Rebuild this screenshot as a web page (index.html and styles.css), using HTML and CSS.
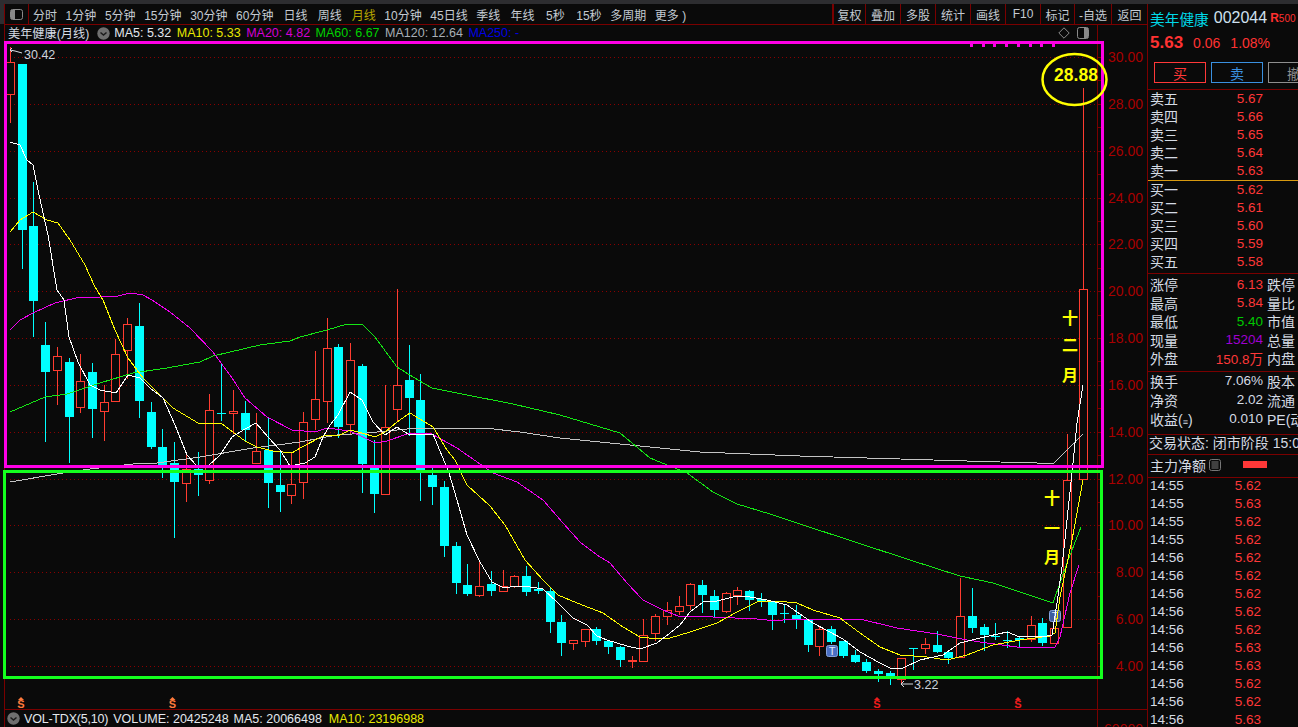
FILE: index.html
```html
<!DOCTYPE html>
<html lang="zh-CN">
<head>
<meta charset="utf-8">
<title>美年健康 002044</title>
<link rel="stylesheet" href="styles.css">
</head>
<body>
<div class="app">
  <div class="topstrip"></div>
  <div class="main">
    <div class="rail"></div>
    <div class="chart-col">
      <div class="toolbar">
        <div class="tb-toggle">
          <svg width="13" height="11" viewBox="0 0 13 11"><rect x="0.5" y="0.5" width="12" height="10" rx="2" fill="none" stroke="#8a8a8a"/><rect x="1" y="1" width="4" height="9" fill="#8a8a8a"/></svg>
        </div>
        <div class="tabs">
          <span>分时</span><span>1分钟</span><span>5分钟</span><span>15分钟</span><span>30分钟</span><span>60分钟</span><span class="w">日线</span><span class="w">周线</span><span class="active w">月线</span><span>10分钟</span><span>45日线</span><span>季线</span><span class="w">年线</span><span class="x">5秒</span><span class="x">15秒</span><span>多周期</span><span>更多 )</span>
        </div>
        <div class="actions">
          <span>复权</span><span>叠加</span><span>多股</span><span>统计</span><span>画线</span><span>F10</span><span>标记</span><span>-自选</span><span>返回</span>
        </div>
      </div>
      <div class="legend">
        <span class="title">美年健康(月线)</span>
        <svg class="chev" width="13" height="13" viewBox="0 0 13 13"><circle cx="6.5" cy="6.5" r="6.2" fill="#6f6f6f"/><path d="M3.5 5.5l3 2.6 3-2.6" fill="none" stroke="#1c1c1c" stroke-width="1.5"/></svg>
        <span class="c-white">MA5: 5.32</span>
        <span class="c-yellow">MA10: 5.33</span>
        <span class="c-magenta">MA20: 4.82</span>
        <span class="c-green">MA60: 6.67</span>
        <span class="c-gray">MA120: 12.64</span>
        <span class="c-blue">MA250: -</span>
        <span class="legend-icons">
          <svg width="12" height="12" viewBox="0 0 12 12"><path d="M6 .8L11.2 6 6 11.2.8 6z" fill="none" stroke="#8a8a8a"/></svg>
          <svg width="12" height="12" viewBox="0 0 12 12"><rect x="0.5" y="0.5" width="11" height="11" rx="2" fill="none" stroke="#8a8a8a"/><rect x="7" y="1" width="4" height="10" fill="#8a8a8a"/></svg>
        </span>
        <span class="scale-cell"></span>
      </div>
      <svg id="chart" class="chart" width="1142" height="668" viewBox="5 41 1142 668">
        <g id="grid"></g>
        <g id="candles"></g>
        <g class="badge">
          <rect x="826.500" y="645.500" width="11" height="11" rx="2" fill="#4a6fc4" stroke="#86a2dc"/>
          <text x="832" y="655" text-anchor="middle" class="badge-t">T</text>
          <rect x="1049.500" y="610.500" width="11" height="11" rx="2" fill="#4a6fc4" fill-opacity=".8" stroke="#86a2dc"/>
          <text x="1055" y="620" text-anchor="middle" class="badge-t">T</text>
        </g>
        <g id="lines"></g>
        <g class="axis-labels" id="axis"></g>
        <path class="note-line" d="M10 50l2-2M10 50l2 2M10 50l5 1 7 2"/>
        <text x="24" y="59" class="note">30.42</text>
        <path class="note-line" d="M901 684h12M901 684l3-3M901 684l3 3"/>
        <text x="914" y="689" class="note">3.22</text>
        <g class="marker orange"><path d="M21 697l3 3h-6z"/><text x="21" y="708">S</text></g>
        <g class="marker orange"><path d="M172.500 697l3 3h-6z"/><text x="172.500" y="708">S</text></g>
        <g class="marker red"><path d="M877 697l3 3h-6z"/><text x="877" y="708">S</text></g>
        <g class="marker red"><path d="M1018 697l3 3h-6z"/><text x="1018" y="708">S</text></g>
        <rect class="box-m" x="5.500" y="42.500" width="1097" height="424"/>
        <path class="box-ticks" d="M970 44h3v3h-3zM982 44h3v3h-3zM993 44h3v3h-3zM1005 44h3v3h-3zM1017 44h3v3h-3zM1029 44h3v3h-3zM1040 44h3v3h-3zM1052 44h3v3h-3z"/>
        <rect class="box-g" x="4.500" y="471.500" width="1097" height="206"/>
        <ellipse class="ring" cx="1074.500" cy="79.500" rx="32" ry="25.500"/>
        <text x="1076" y="81" text-anchor="middle" class="peak">28.88</text>
        <g class="month">
          <text x="1070" y="324">十</text><text x="1070" y="351">二</text><text x="1070" y="381">月</text>
          <text x="1052" y="504">十</text><text x="1052" y="534">一</text><text x="1052" y="563">月</text>
        </g>
      </svg>
      <div class="vol-legend">
        <svg class="chev" width="13" height="13" viewBox="0 0 13 13"><circle cx="6.5" cy="6.5" r="6.2" fill="#6f6f6f"/><path d="M3.5 5.500l3 2.600 3-2.600" fill="none" stroke="#1c1c1c" stroke-width="1.500"/></svg>
        <span class="c-white tight">VOL-TDX(5,10)</span>
        <span class="c-white">VOLUME: 20425248</span>
        <span class="c-white">MA5: 20066498</span>
        <span class="c-yellow more">MA10: 23196988</span>
        <span class="scale-cell vol-scale">60000</span>
      </div>
    </div>
    <aside class="side">
      <div class="stock"><span class="name">美年健康</span><span class="code">002044</span><span class="r500"><b>R</b>500</span></div>
      <div class="quote"><b>5.63</b><span>0.06</span><span>1.08%</span></div>
      <div class="trade"><span class="buy">买</span><span class="sell">卖</span><span class="cancel">撤</span></div>
      <div class="book sect">
        <div class="row"><span>卖五</span><em>5.67</em></div>
        <div class="row"><span>卖四</span><em>5.66</em></div>
        <div class="row"><span>卖三</span><em>5.65</em></div>
        <div class="row"><span>卖二</span><em>5.64</em></div>
        <div class="row"><span>卖一</span><em>5.63</em></div>
      </div>
      <div class="book mid">
        <div class="row"><span>买一</span><em>5.62</em></div>
        <div class="row"><span>买二</span><em>5.61</em></div>
        <div class="row"><span>买三</span><em>5.60</em></div>
        <div class="row"><span>买四</span><em>5.59</em></div>
        <div class="row"><span>买五</span><em>5.58</em></div>
      </div>
      <div class="stats one sect">
        <div class="row"><span>涨停</span><em>6.13</em><span class="r">跌停</span></div>
        <div class="row"><span>最高</span><em>5.84</em><span class="r">量比</span></div>
        <div class="row"><span>最低</span><em class="g">5.40</em><span class="r">市值</span></div>
        <div class="row"><span>现量</span><em class="p">15204</em><span class="r">总量</span></div>
        <div class="row"><span>外盘</span><em>150.8万</em><span class="r">内盘</span></div>
      </div>
      <div class="stats two sect">
        <div class="row"><span>换手</span><em class="w">7.06%</em><span class="r">股本</span></div>
        <div class="row"><span>净资</span><em class="w">2.02</em><span class="r">流通</span></div>
        <div class="row"><span>收益(<small>≡</small>)</span><em class="w">0.010</em><span class="r">PE(动</span></div>
      </div>
      <div class="state sect">交易状态: 闭市阶段 15:00</div>
      <div class="flow sect">
        <span>主力净额</span>
        <svg width="12" height="12" viewBox="0 0 12 12"><rect x=".5" y=".5" width="11" height="11" rx="2" fill="none" stroke="#777"/><path d="M2.500 3h7M2.500 5h7M2.500 7h7M2.500 9h7" stroke="#777"/></svg>
        <i class="bar"></i>
      </div>
      <div class="ticks sect">
        <div class="tick"><span>14:55</span><em>5.62</em></div>
        <div class="tick"><span>14:55</span><em>5.63</em></div>
        <div class="tick"><span>14:55</span><em>5.62</em></div>
        <div class="tick"><span>14:55</span><em>5.62</em></div>
        <div class="tick"><span>14:56</span><em>5.62</em></div>
        <div class="tick"><span>14:56</span><em>5.62</em></div>
        <div class="tick"><span>14:56</span><em>5.62</em><i></i></div>
        <div class="tick"><span>14:56</span><em>5.62</em></div>
        <div class="tick"><span>14:56</span><em>5.62</em><i></i></div>
        <div class="tick"><span>14:56</span><em>5.63</em></div>
        <div class="tick"><span>14:56</span><em>5.63</em></div>
        <div class="tick"><span>14:56</span><em>5.62</em></div>
        <div class="tick"><span>14:56</span><em>5.62</em></div>
        <div class="tick"><span>14:56</span><em>5.63</em></div>
      </div>
    </aside>
  </div>
</div>
<script src="chart.js"></script>
</body>
</html>
```

FILE: styles.css
```css
* { box-sizing: border-box; }
html, body { margin: 0; height: 100%; overflow: hidden; background: #0a0a0a; }
body { font-family: "Liberation Sans", "Noto Sans CJK SC", sans-serif; color: #d5dbe4; }
em, i { font-style: normal; }

.app { width: 1298px; height: 727px; display: flex; flex-direction: column; overflow: hidden; }
.topstrip { height: 4px; flex: none; background: #2d2d30; }
.main { flex: 1; display: flex; min-height: 0; }
.rail { width: 4px; flex: none; }
.rail::before { content: ""; display: block; height: 20px; background: #2d2d30; }

.chart-col { width: 1143px; flex: none; display: flex; flex-direction: column; border-left: 1px solid #7a0000; }

.toolbar { height: 21px; flex: none; display: flex; align-items: stretch; border-bottom: 1px solid #7a0000; font-size: 12px; color: #c4cad2; }
.tb-toggle { width: 24px; flex: none; display: flex; align-items: center; justify-content: center; border-right: 1px solid #7a0000; }
.tabs { display: flex; align-items: center; gap: 8.6px; padding-left: 4px; white-space: nowrap; font-size: 12px; }
.tabs span { display: block; }
.tabs .w { margin-left: 1.5px; }
.tabs .x { margin-left: 3px; }
.tabs .active { color: #b8a800; }
.actions { margin-left: auto; display: flex; border-left: 2px solid #7a0000; font-size: 12px; }
.actions span { width: 35px; display: flex; align-items: center; justify-content: center; border-right: 1px solid #7a0000; }
.actions span:first-child { width: 32px; }
.actions span:nth-child(7) { width: 34px; }
.actions span:nth-child(8) { width: 37px; }
.actions span:last-child { border-right: 0; }

.legend { height: 16px; flex: none; display: flex; align-items: center; padding-left: 3px; font-size: 12.500px; white-space: nowrap; gap: 5.500px; }
.legend .title { color: #d5dbe4; font-size: 12.200px; }
.legend .chev { margin: 0 -1px 0 2px; }
.legend-icons { margin-left: auto; display: flex; gap: 7px; margin-right: 3px; }
.scale-cell { width: 50px; flex: none; align-self: stretch; border-left: 1px solid #7a0000; }
.c-white { color: #e4e8ee; }
.c-yellow { color: #e8e800; }
.c-magenta { color: #d400d4; }
.c-green { color: #00d000; }
.c-gray { color: #a8aeb6; }
.c-blue { color: #0000e6; }

.chart { display: block; flex: none; overflow: visible; }
.gridline { stroke: #8a0000; stroke-width: 1; stroke-dasharray: 1 3; shape-rendering: crispEdges; }
.tickmark { stroke: #7a0000; stroke-width: 1; shape-rendering: crispEdges; }
.axis-line { stroke: #7a0000; stroke-width: 1; shape-rendering: crispEdges; }
.axis-labels text { fill: #a80000; font-size: 14px; text-anchor: end; }
.up { fill: #0a0a0a; stroke: #ff3c30; stroke-width: 1; shape-rendering: crispEdges; }
.up-w { stroke: #ff3c30; stroke-width: 1; shape-rendering: crispEdges; }
.dn { fill: #00ffff; shape-rendering: crispEdges; }
.dn-w { stroke: #00ffff; stroke-width: 1; shape-rendering: crispEdges; }
.ma { fill: none; stroke-width: 1; shape-rendering: crispEdges; }
.note { fill: #ccd3dc; font-size: 12.500px; }
.note-line { fill: none; stroke: #d8dce2; stroke-width: 1; }
.badge-t { fill: #e6ecf6; font-size: 11px; }
.marker text { font-size: 11px; font-weight: 700; text-anchor: middle; }
.marker.orange { fill: #ff7a3c; }
.marker.red { fill: #ee1c1c; }
.box-m { fill: none; stroke: #ff00e6; stroke-width: 3; shape-rendering: crispEdges; }
.box-g { fill: none; stroke: #14ff1e; stroke-width: 3; shape-rendering: crispEdges; }
.box-ticks { fill: #ff00e6; }
.ring { fill: none; stroke: #ffff00; stroke-width: 2.500; }
.peak { fill: #ffff00; font-size: 17.500px; font-weight: 700; }
.month text { fill: #ffff00; font-size: 16px; font-weight: 700; text-anchor: middle; }

.vol-legend { flex: 1; min-height: 0; display: flex; align-items: center; padding-left: 2px; gap: 5px; border-top: 1px solid #7a0000; font-size: 12.500px; white-space: nowrap; overflow: hidden; }
.vol-legend .chev { margin-right: -1px; }
.vol-legend .tight { letter-spacing: -0.2px; }
.vol-legend .more { margin-left: 2px; }
.vol-scale { margin-left: auto; text-align: right; padding: 11px 4px 0 0; color: #a80000; font-size: 14px; }

.side { flex: 1; min-width: 0; display: flex; flex-direction: column; overflow: hidden; border-left: 1px solid #7a0000; font-size: 14px; }
.side > div { flex: none; }
.stock { height: 30px; display: flex; align-items: center; padding: 0 0 2px 2px; white-space: nowrap; }
.name { color: #00d8e8; font-size: 14.700px; }
.code { font-size: 16px; margin-left: 5px; color: #cfe0ee; }
.r500 { margin-left: 3px; color: #ff3030; font-size: 10px; }
.r500 b { font-size: 12px; }
.quote { height: 18px; display: flex; align-items: center; gap: 10px; padding-left: 2px; color: #ff3232; font-size: 14px; }
.quote b { font-size: 17px; }
.trade { height: 37px; display: flex; gap: 5px; padding: 10px 0 6px 6px; }
.trade span { width: 52px; flex: none; display: flex; align-items: center; justify-content: center; border: 1px solid; }
.buy { color: #ff3838; border-color: #ff3838 !important; }
.sell { color: #3a90e0; border-color: #3a90e0 !important; }
.cancel { color: #8e8e8e; border-color: #8e8e8e !important; }
.sect { border-top: 1px solid #7a0000; }

.row { display: flex; align-items: center; padding: 0 0 2px 2px; white-space: nowrap; }
.row span { width: 45px; flex: none; }
.row em { width: 68px; flex: none; text-align: right; color: #ff3838; font-size: 13.500px; }
.row .r { width: auto; margin-left: 4px; }
.book { height: 91px; }
.book .row { height: 18px; }
.book.mid { border-top: 1px solid #d89a10; height: 93px; }
.stats.one { height: 98px; padding-top: 2px; }
.stats.one .row { height: 18.500px; }
.stats.two { height: 63px; }
.stats .row em.g { color: #00c800; }
.stats .row em.p { color: #a000d0; }
.stats .row em.w { color: #d5dbe4; }
.stats.two .row { height: 19px; }
small { font-size: 9px; }
.state { height: 20px; line-height: 17px; padding-left: 1px; white-space: nowrap; }
.flow { height: 23px; display: flex; align-items: center; padding: 0 0 3px 2px; gap: 3px; white-space: nowrap; }
.bar { width: 24px; height: 7px; margin-left: 19px; background: #ff3838; }
.ticks { flex: 1; }
.tick { height: 18px; display: flex; align-items: center; padding: 0 0 4px 2px; font-size: 13.500px; }
.tick span { width: 45px; flex: none; }
.tick em { width: 66px; flex: none; text-align: right; color: #ff3838; }
.tick i { width: 2px; height: 5px; margin-left: 37px; background: #8a10d0; }
```

FILE: chart.js
```js
var NS = "http://www.w3.org/2000/svg";
function add(parent, tag, attrs, text) {
  var el = document.createElementNS(NS, tag);
  for (var k in attrs) el.setAttribute(k, attrs[k]);
  if (text) el.textContent = text;
  parent.appendChild(el);
  return el;
}
function priceY(p) { return 57 + (30 - p) * 23.42; }

var grid = document.getElementById("grid");
var axis = document.getElementById("axis");
add(grid, "line", { x1: 1097.5, x2: 1097.5, y1: 41, y2: 709, "class": "axis-line" });
for (var p = 30; p >= 4; p -= 1) {
  var y = Math.round(priceY(p)) + 0.5;
  add(grid, "line", { x1: 1097, x2: 1101, y1: y, y2: y, "class": "tickmark" });
  if (p % 2 === 0) {
    add(grid, "line", { x1: 10, x2: 1097, y1: y, y2: y, "class": "gridline" });
    add(axis, "text", { x: 1143, y: y + 4 }, p.toFixed(2));
  }
}

// centre x, 1 = up (red outline) / 0 = down (cyan fill), body top, body bottom, wick top, wick bottom
var candles = [
[10,1,62,94,47,122],[22,0,64,230,64,268],[33,0,226,301,182,336],[45,0,345,372,322,441],
[57,1,356,370,347,404],[69,0,362,417,358,462],[80,1,381,407,354,412],[92,0,372,409,363,437],
[104,1,402,411,385,440],[115,1,354,401,339,401],[127,1,324,350,318,378],[139,0,326,401,303,417],
[151,0,412,447,402,448],[162,0,447,466,429,477],[174,0,463,482,442,537],[186,1,469,483,455,501],
[198,0,469,475,452,495],[209,1,410,480,394,483],[221,0,413,414,364,420],[233,1,411,413,390,433],
[245,0,413,430,401,440],[256,1,451,463,413,463],[268,0,450,483,417,507],[280,0,485,492,450,511],
[291,1,484,495,453,503],[303,1,422,482,412,498],[315,1,399,419,351,429],[327,1,348,401,318,422],
[338,0,347,427,344,437],[350,1,360,424,343,433],[362,0,366,464,364,492],[374,0,466,494,440,512],
[385,1,427,494,385,494],[397,1,385,409,289,420],[409,0,380,398,345,435],[420,0,400,470,374,500],
[432,0,475,487,468,504],[444,0,487,546,481,556],[456,0,546,583,542,593],[467,0,585,594,564,595],
[479,1,586,595,562,596],[491,0,584,591,571,595],[503,1,586,591,570,591],[514,1,576,586,575,587],
[526,0,576,592,566,595],[538,0,589,591,582,593],[550,0,591,622,587,632],[561,0,622,643,615,655],
[573,1,640,643,640,649],[585,1,629,641,629,646],[596,0,629,641,627,644],[608,0,641,647,641,653],
[620,0,647,660,646,666],[632,1,660,660,656,667],[643,1,635,661,619,661],[655,1,616,633,614,640],
[667,1,610,616,602,624],[679,1,606,611,596,614],[690,1,584,605,583,609],[702,0,585,595,580,612],
[714,0,596,610,590,616],[726,1,593,611,592,612],[737,1,590,595,587,604],[749,0,591,600,590,610],
[761,0,599,601,593,606],[772,0,601,615,601,629],[784,0,613,614,605,622],[796,0,615,619,605,628],
[808,0,620,645,620,651],[819,1,629,646,627,655],[831,0,629,642,626,643],[843,0,641,656,641,657],
[855,0,655,662,650,662],[866,0,662,671,659,672],[878,0,671,674,669,681],[890,0,673,677,671,684],
[901,1,658,679,658,683],[913,0,648,649,648,669],[925,1,644,648,638,653],[937,0,645,652,631,652],
[948,0,652,658,650,663],[960,1,616,657,578,657],[972,0,616,628,588,632],[984,0,627,635,624,650],
[995,0,636,637,623,639],[1007,0,640,640,631,647],[1019,0,638,640,637,646],[1031,1,625,639,616,641],
[1042,0,623,643,618,645],[1054,1,628,643,628,643],[1067,1,480,627,434,627],[1083,1,289,479,88,479]
];
var cg = document.getElementById("candles");
candles.forEach(function (c) {
  var x = c[0] + 0.5, up = c[1] === 1;
  add(cg, "line", { x1: x, x2: x, y1: c[4], y2: c[5] + 1, "class": up ? "up-w" : "dn-w" });
  if (up) {
    add(cg, "rect", { x: x - 4, y: c[2] + 0.5, width: 8, height: Math.max(c[3] - c[2], 1), "class": "up" });
  } else {
    add(cg, "rect", { x: x - 4.5, y: c[2], width: 9, height: Math.max(c[3] - c[2], 1), "class": "dn" });
  }
});

var lines = [
["#c4c4c4", "10,482 63,473 90,469 133,464 157,463 200,457 253,448 277,445 300,442 337,435 367,433 417,428 485,428 520,432 560,438 600,442 700,452 800,456 900,459 1000,462 1037,463 1053,464 1083,434"],
["#14e614", "10,412 45,397 67,394 100,383 133,373 167,368 200,362 213,356 260,345 290,341 300,337 327,330 347,324 362,324 375,337 397,367 413,377 432,388 467,395 513,404 560,415 620,433 650,458 687,473 713,492 737,504 770,514 800,524 910,560 960,576 993,583 1053,603 1067,563 1081,527"],
["#f000f0", "10,330 20,320 33,313 55,303 80,297 100,297 118,296 130,293 143,295 152,300 170,312 190,328 213,352 232,378 245,398 267,417 292,430 315,432 327,428 350,431 363,437 375,443 387,441 410,433 430,433 457,448 493,473 517,482 543,500 563,523 580,542 597,555 610,563 627,583 643,600 663,610 678,616 713,617 757,619 777,621 790,619 860,619 897,628 937,634 967,640 987,643 1017,647 1055,647 1060,637 1070,593 1079,565"],
["#ffff00", "10,232 20,220 33,212 47,220 58,223 70,240 85,265 95,287 103,300 115,330 128,358 143,378 163,398 173,408 188,417 198,423 222,424 233,432 245,441 257,447 273,451 292,453 300,448 325,435 340,435 350,430 362,433 375,437 385,432 397,422 410,413 433,427 447,450 455,460 467,485 490,506 505,525 525,560 543,580 558,595 577,603 603,613 623,627 640,637 657,639 670,638 690,632 717,623 737,612 757,602 777,601 797,603 813,610 840,618 860,633 880,647 900,655 927,657 947,660 967,655 993,645 1020,640 1050,636 1055,633 1060,597 1072,540 1083,480"],
["#ffffff", "10,142 20,145 27,160 33,165 38,190 48,235 57,290 64,300 69,337 78,362 90,385 100,390 116,393 128,375 140,378 150,388 163,398 175,425 187,455 197,466 208,466 220,455 232,437 245,429 256,423 268,437 280,450 290,466 305,463 315,457 323,437 330,425 338,415 350,392 362,400 373,422 385,435 397,427 408,434 433,434 449,473 457,500 467,535 480,562 492,582 504,588 517,586 530,587 543,589 557,602 573,618 587,625 597,636 607,640 627,646 640,649 657,643 670,633 680,625 690,612 703,602 717,601 737,596 750,597 767,600 787,605 797,612 813,623 843,639 860,652 880,663 890,668 903,668 920,660 943,655 960,643 980,638 1007,632 1020,637 1047,636 1052,635 1057,603 1062,567 1072,473 1077,423 1083,385"]
];
var lg = document.getElementById("lines");
lines.forEach(function (l) {
  add(lg, "polyline", { points: l[1], stroke: l[0], "class": "ma" });
});
```
